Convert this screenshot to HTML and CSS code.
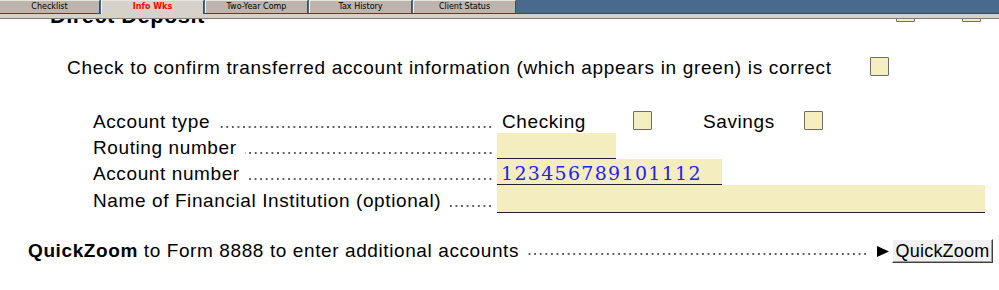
FILE: index.html
```html
<!DOCTYPE html>
<html>
<head>
<meta charset="utf-8">
<link rel="stylesheet" href="styles.css">
</head>
<body>
<div class="tabbar">
  <div class="tab">Checklist</div>
  <div class="tab active">Info Wks</div>
  <div class="tab">Two-Year Comp</div>
  <div class="tab">Tax History</div>
  <div class="tab">Client Status</div>
</div>
<div class="band"></div>
<div class="content">
  <div class="head-row">
    <h2 class="heading">Direct Deposit</h2>
    <span class="box top-box1"></span>
    <span class="box top-box2"></span>
  </div>
  <div class="confirm-row">
    <span class="confirm-text">Check to confirm transferred account information (which appears in green) is correct</span>
    <span class="box confirm-box"></span>
  </div>
  <div class="fields">
    <div class="row">
      <div class="label"><span>Account type</span><span class="leader"></span></div>
      <span class="opt checking">Checking</span>
      <span class="box chk-box"></span>
      <span class="opt savings">Savings</span>
      <span class="box sav-box"></span>
    </div>
    <div class="row">
      <div class="label"><span>Routing number</span><span class="leader"></span></div>
      <div class="field routing"></div>
    </div>
    <div class="row">
      <div class="label"><span>Account number</span><span class="leader"></span></div>
      <div class="field account">123456789101112</div>
    </div>
    <div class="row">
      <div class="label"><span>Name of Financial Institution (optional)</span><span class="leader"></span></div>
      <div class="field bank"></div>
    </div>
  </div>
  <div class="qz-row">
    <span class="qz-text"><b>QuickZoom</b> to Form 8888 to enter additional accounts</span>
    <span class="leader qz-leader"></span>
    <svg class="arrow" width="12" height="11" viewBox="0 0 12 11"><polygon points="0,0 12,5.5 0,11" fill="#000"/></svg>
    <button class="qz-btn">QuickZoom</button>
  </div>
</div>
</body>
</html>
```
FILE: styles.css
```css
html, body {
  margin: 0;
  padding: 0;
  background: #ffffff;
}
body {
  width: 999px;
  height: 290px;
  overflow: hidden;
  font-family: "Liberation Sans", Arial, sans-serif;
  color: #000;
}
.tabbar {
  display: flex;
  height: 13px;
  background: #4a6a8b;
  border-bottom: 1px solid #2e4a66;
  gap: 1px;
}
.tab {
  width: 103px;
  height: 13px;
  flex: none;
  box-sizing: border-box;
  background: #bdb5ad;
  border-left: 1px solid #f4f2ee;
  border-right: 1px solid #4a4a4a;
  border-top: 1px solid #e8e4de;
  font-family: Tahoma, "DejaVu Sans", sans-serif;
  font-size: 8px;
  line-height: 11px;
  text-align: center;
  color: #000;
}
.tab:first-child {
  width: 100px;
  border-left: none;
}
.tab.active {
  background: #d6d2ca;
  color: #ff0000;
  font-weight: bold;
  height: 14px;
}
.band {
  height: 4px;
  background: #d6d2ca;
  border-bottom: 1px solid #7c7c7c;
}
.content {
  overflow: hidden;
  height: 271px;
  letter-spacing: 0.6px;
}
.head-row {
  display: flex;
  align-items: flex-end;
  height: 22px;
  margin-top: -19px;
}
.heading {
  margin: 0 0 0 50px;
  font-size: 22px;
  font-weight: bold;
  line-height: 22px;
  width: 846px;
  letter-spacing: 0.4px;
  position: relative;
  top: 5px;
}
.box {
  display: inline-block;
  width: 19px;
  height: 19px;
  box-sizing: border-box;
  background: #f5efbf;
  border: 1px solid #6c6c6c;
  border-radius: 1px;
  flex: none;
}
.top-box2 { margin-left: 47px; }
.confirm-row {
  display: flex;
  align-items: center;
  margin-top: 35px;
  height: 19px;
}
.confirm-text {
  margin-left: 67px;
  font-size: 19px;
  letter-spacing: 0.68px;
  width: 803px;
  white-space: nowrap;
  padding-top: 2px;
}
.fields {
  margin-top: 31px;
  padding-left: 93px;
}
.row {
  display: flex;
  align-items: center;
  height: 26px;
  font-size: 19px;
}
.label {
  display: flex;
  align-items: baseline;
  width: 404px;
  flex: none;
  white-space: nowrap;
  padding-top: 3px;
}
.opt { padding-top: 3px; }
.leader {
  flex: 1;
  height: 2px;
  margin: 0 4px 0 8px;
  background-image: radial-gradient(circle, #333 0.6px, transparent 1px);
  background-size: 5.6px 2px;
  background-position: right center;
  background-repeat: repeat-x;
}
.opt.checking { margin-left: 5px; width: 131px; }
.opt.savings { margin-left: 51px; width: 101px; }
.field {
  height: 100%;
  box-sizing: border-box;
  background: #f4edbf;
  border-bottom: 1px solid #222;
}
.routing { width: 119px; }
.account {
  width: 225px;
  font-family: "DejaVu Serif", serif;
  font-size: 19px;
  letter-spacing: 1.3px;
  color: #2222ee;
  padding-left: 4px;
  line-height: 28px;
}
.bank { width: 488px; height: 28px; }
.row:last-child { height: 28px; }
.qz-row {
  display: flex;
  align-items: center;
  margin-top: 26px;
  height: 24px;
  font-size: 19px;
}
.qz-text {
  margin-left: 28px;
  white-space: nowrap;
}
.qz-leader {
  margin: 6px 9px 0 8px;
}
.arrow {
  flex: none;
  margin-right: 3px;
}
.qz-btn {
  width: 101px;
  height: 24px;
  margin-right: 6px;
  padding: 0;
  flex: none;
  font-family: "Liberation Sans", Arial, sans-serif;
  font-size: 18px;
  letter-spacing: 0.2px;
  color: #000;
  background: #f0f0f0;
  border: 1px solid;
  border-color: #ffffff #404040 #404040 #ffffff;
  box-shadow: inset -1px -1px 0 #a0a0a0;
}
```
